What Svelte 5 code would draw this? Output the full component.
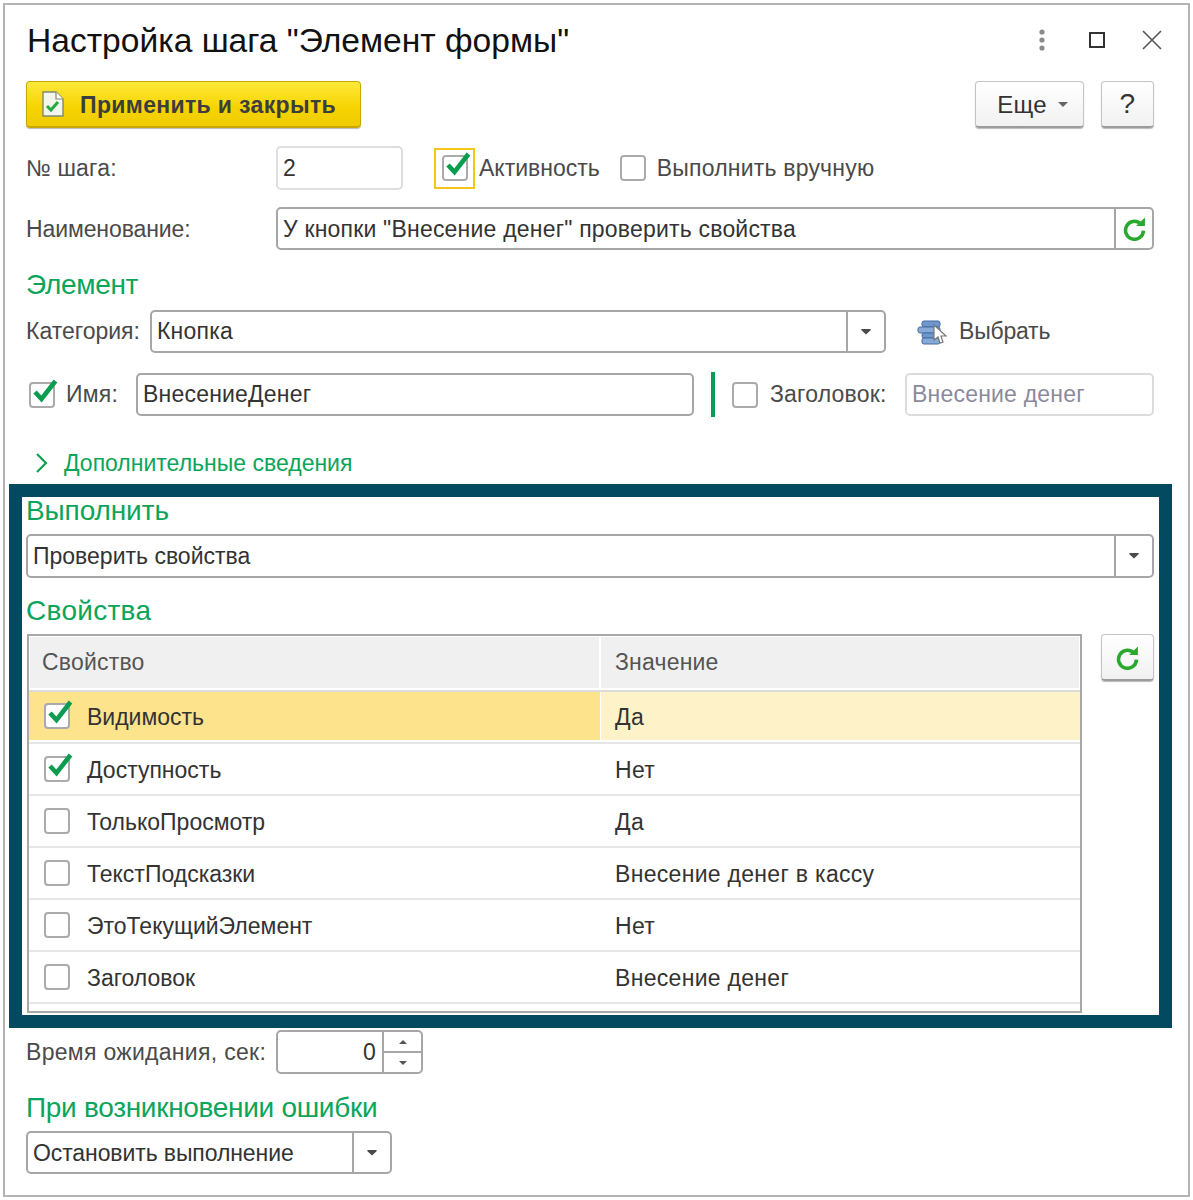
<script>
	const props = [
		{ name: 'Видимость', value: 'Да', on: true },
		{ name: 'Доступность', value: 'Нет', on: true },
		{ name: 'ТолькоПросмотр', value: 'Да', on: false },
		{ name: 'ТекстПодсказки', value: 'Внесение денег в кассу', on: false },
		{ name: 'ЭтоТекущийЭлемент', value: 'Нет', on: false },
		{ name: 'Заголовок', value: 'Внесение денег', on: false }
	];
</script>

{#snippet checkbox(on)}
	<span class="check">
		{#if on}
			<svg viewBox="0 0 28 28" width="28" height="28"><path d="M5 14l6.5 7L25.5 3" fill="none" stroke="#0a9d50" stroke-width="4.6" /></svg>
		{/if}
	</span>
{/snippet}

{#snippet refresh(size)}
	<svg viewBox="0 0 24 24" width={size} height={size}>
		<path d="M18.6 8.2A8.6 8.6 0 1 0 20.6 14" fill="none" stroke="#2aa92e" stroke-width="3.4" />
		<path d="M13.5 9.6H22V1.4z" fill="#2aa92e" />
	</svg>
{/snippet}

{#snippet arrow()}
	<svg class="arrow" viewBox="0 0 12 7" width="10" height="6"><path d="M0.5 0h11v1.5L6 6.5 0.5 1.5z" fill="#4a4a4a" /></svg>
{/snippet}

<div class="window">
	<header class="title-row">
		<h1>Настройка шага "Элемент формы"</h1>
		<div class="win-tools">
			<svg viewBox="0 0 8 24" width="8" height="24"><circle cx="4" cy="4" r="2.6" fill="#8a8a8a" /><circle cx="4" cy="12" r="2.6" fill="#8a8a8a" /><circle cx="4" cy="20" r="2.6" fill="#8a8a8a" /></svg>
			<svg class="max" viewBox="0 0 16 16" width="16" height="16"><rect x="1" y="1" width="14" height="14" fill="none" stroke="#333" stroke-width="2" /></svg>
			<svg class="close" viewBox="0 0 20 20" width="20" height="20"><path d="M1 1l18 18M19 1L1 19" stroke="#555" stroke-width="1.6" /></svg>
		</div>
	</header>

	<div class="row toolbar">
		<button class="btn primary">
			<svg viewBox="0 0 22 26" width="22" height="26">
				<path d="M1 1h13l7 7v17H1z" fill="#f4f6ee" stroke="#7d8a70" stroke-width="1.4" />
				<path d="M14 1v7h7" fill="#fff" stroke="#7d8a70" stroke-width="1.2" />
				<path d="M5 15l4 4 7-8" fill="none" stroke="#26a845" stroke-width="3" />
			</svg>
			<span class="btn-text">Применить и закрыть</span>
		</button>
		<span class="spacer"></span>
		<button class="btn more"><span class="btn-text">Еще</span> <svg viewBox="0 0 10 5" width="10" height="5"><path d="M0 0h10L5 5z" fill="#666" /></svg></button>
		<button class="btn help">?</button>
	</div>

	<div class="row step">
		<label class="label wide" for="step">№ шага:</label>
		<div class="input short" id="step">2</div>
		<span class="focus">{@render checkbox(true)}</span>
		<span class="label active">Активность</span>
		{@render checkbox(false)}
		<span class="label manual">Выполнить вручную</span>
	</div>

	<div class="row name">
		<span class="label wide tight">Наименование:</span>
		<div class="input grow">
			<span class="value">У кнопки "Внесение денег" проверить свойства</span>
			<span class="addon">{@render refresh(25)}</span>
		</div>
	</div>

	<h2 class="heading element">Элемент</h2>

	<div class="row category">
		<span class="label cat">Категория:</span>
		<div class="input cat-input">
			<span class="value">Кнопка</span>
			<span class="addon">{@render arrow()}</span>
		</div>
		<span class="pick">
			<svg viewBox="0 0 30 26" width="30" height="26">
				<rect x="5" y="2" width="18" height="6" rx="2" fill="#6f97cc" stroke="#456da5" />
				<rect x="1" y="8" width="22" height="6" rx="2" fill="#86a9d8" stroke="#456da5" />
				<rect x="5" y="14" width="18" height="5" rx="2" fill="#6f97cc" stroke="#456da5" />
				<rect x="5" y="19" width="18" height="6" rx="2" fill="#86a9d8" stroke="#456da5" />
				<path d="M17 6v15l4-3 2 6 3-1-2-6h5z" fill="#fff" stroke="#777" stroke-width="1.2" />
			</svg>
			<span class="label">Выбрать</span>
		</span>
	</div>

	<div class="row ident">
		<span class="ident-check">{@render checkbox(true)}</span>
		<span class="label ident-label">Имя:</span>
		<div class="input ident-input"><span class="value">ВнесениеДенег</span></div>
		<span class="divider"></span>
		{@render checkbox(false)}
		<span class="label caption">Заголовок:</span>
		<div class="input soft caption-input"><span class="value">Внесение денег</span></div>
	</div>

	<div class="row details">
		<svg viewBox="0 0 14 22" width="14" height="22"><path d="M2 2l9 9-9 9" fill="none" stroke="#10a050" stroke-width="2.2" /></svg>
		<span>Дополнительные сведения</span>
	</div>

	<section class="frame">
		<h2 class="heading run">Выполнить</h2>
		<div class="input select-run">
			<span class="value">Проверить свойства</span>
			<span class="addon">{@render arrow()}</span>
		</div>

		<h2 class="heading props">Свойства</h2>
		<div class="props-row">
			<div class="table">
				<div class="thead">
					<div class="th">Свойство</div>
					<div class="th">Значение</div>
				</div>
				{#each props as prop, i}
					<div class="tr" class:selected={i === 0}>
						<div class="td first">
							{@render checkbox(prop.on)}
							<span>{prop.name}</span>
						</div>
						<div class="td second">{prop.value}</div>
					</div>
				{/each}
			</div>
			<button class="btn reload">{@render refresh(25)}</button>
		</div>
	</section>

	<div class="row wait">
		<span class="label wide wider">Время ожидания, сек:</span>
		<div class="input spin">
			<span class="value num">0</span>
			<span class="spin-btns">
				<span><svg viewBox="0 0 8 4" width="8" height="4"><path d="M0 4h8L4 0z" fill="#555" /></svg></span>
				<span><svg viewBox="0 0 8 4" width="8" height="4"><path d="M0 0h8L4 4z" fill="#555" /></svg></span>
			</span>
		</div>
	</div>

	<h2 class="heading error">При возникновении ошибки</h2>
	<div class="input select-error">
		<span class="value">Остановить выполнение</span>
		<span class="addon">{@render arrow()}</span>
	</div>
</div>

<style>
	:global(body) {
		background: #fff;
	}

	.window {
		box-sizing: border-box;
		width: 1187px;
		height: 1194px;
		margin: 3px;
		padding: 0 34px 0 21px;
		border: 2px solid #b4b4b4;
		background: #fff;
		font-family: 'Liberation Sans', Arial, sans-serif;
		font-size: 23px;
		letter-spacing: 0.2px;
		color: #333;
	}

	.title-row {
		display: flex;
		align-items: center;
		height: 70px;
	}

	h1 {
		margin: 0 0 0 1px;
		flex: 1;
		padding-top: 2px;
		font-size: 33.6px;
		font-weight: 400;
		letter-spacing: 0;
		color: #111;
	}

	.win-tools {
		display: flex;
		align-items: center;
		margin-right: -8px;
	}

	.win-tools .max {
		margin-left: 43px;
	}

	.win-tools .close {
		margin-left: 37px;
	}

	.row {
		display: flex;
		align-items: center;
	}

	.spacer {
		flex: 1;
	}

	.btn {
		box-sizing: border-box;
		display: flex;
		align-items: center;
		justify-content: center;
		height: 47px;
		padding: 0;
		border: 1px solid #c4c4c4;
		border-bottom: 2px solid #9c9c9c;
		border-radius: 4px;
		background: linear-gradient(#fff, #f1f1f1);
		box-shadow: 0 1px 1px #bbb;
		font: inherit;
		letter-spacing: inherit;
		color: #333;
	}

	.btn-text {
		padding-top: 2px;
	}

	.toolbar {
		margin-top: 6px;
	}

	.primary {
		justify-content: flex-start;
		width: 335px;
		padding-left: 15px;
		gap: 16px;
		border-color: #c8a800;
		background: linear-gradient(#ffe93a, #f5d300 60%, #efcb00);
		font-weight: 700;
		letter-spacing: 0.35px;
		color: #3d3d3d;
	}

	.more {
		width: 109px;
		gap: 11px;
		padding-left: 6px;
		font-size: 24px;
	}

	.help {
		width: 53px;
		margin-left: 17px;
		font-size: 28px;
	}

	.label {
		white-space: nowrap;
		color: #4a4a4a;
	}

	.wide {
		width: 250px;
		flex: none;
	}

	.tight {
		letter-spacing: -0.1px;
	}

	.wider {
		letter-spacing: 0.3px;
	}

	.input {
		box-sizing: border-box;
		display: flex;
		align-items: center;
		height: 43px;
		border: 2px solid #a6a6a6;
		border-radius: 5px;
		background: #fff;
	}

	.value {
		flex: 1;
		padding-left: 5px;
		white-space: nowrap;
		color: #333;
	}

	.addon {
		box-sizing: border-box;
		display: flex;
		align-items: center;
		justify-content: center;
		flex: none;
		width: 38px;
		height: 100%;
		border-left: 2px solid #a6a6a6;
	}

	.grow {
		flex: 1;
	}

	.step {
		margin-top: 18px;
		height: 44px;
	}

	.short {
		box-sizing: border-box;
		width: 127px;
		height: 44px;
		padding-left: 5px;
		border-color: #dedede;
	}

	.focus {
		box-sizing: border-box;
		display: flex;
		align-items: center;
		justify-content: center;
		width: 41px;
		height: 41px;
		margin-left: 31px;
		border: 2px solid #f6c51b;
	}

	.active {
		margin: 0 20px 0 4px;
		letter-spacing: 0;
	}

	.manual {
		margin-left: 11px;
	}

	.check {
		box-sizing: border-box;
		position: relative;
		display: inline-block;
		flex: none;
		width: 26px;
		height: 26px;
		border: 2px solid #ababab;
		border-radius: 4px;
		background: #fff;
	}

	.check svg {
		position: absolute;
		left: -1px;
		top: -6px;
		overflow: visible;
	}

	.name {
		margin-top: 17px;
		height: 43px;
	}

	.name .label,
	.name .value,
	.select-error .value {
		padding-top: 2px;
	}

	.heading {
		margin: 0;
		font-size: 28px;
		font-weight: 400;
		letter-spacing: -0.3px;
		line-height: 30px;
		color: #0aa55a;
	}

	.element {
		margin-top: 20px;
	}

	.category {
		margin-top: 10px;
		height: 43px;
	}

	.cat {
		width: 124px;
		flex: none;
		letter-spacing: 0;
	}

	.cat-input {
		width: 736px;
	}

	.pick {
		display: flex;
		align-items: center;
		gap: 12px;
		margin-left: 31px;
		letter-spacing: -0.2px;
	}

	.ident {
		margin-top: 19px;
		height: 45px;
	}

	.ident-check {
		display: flex;
		margin-left: 3px;
	}

	.ident-label {
		margin-left: 11px;
		width: 70px;
	}

	.ident-input {
		width: 558px;
	}

	.divider {
		width: 4px;
		height: 45px;
		margin: 0 17px;
		background: #0a9d58;
	}

	.caption {
		width: 135px;
		margin-left: 12px;
		flex: none;
	}

	.soft {
		border-color: #dcdcdc;
	}

	.soft .value {
		color: #8a8a9c;
	}

	.caption-input {
		flex: 1;
	}

	.details {
		gap: 15px;
		height: 32px;
		margin-top: 30px;
		padding-left: 9px;
		letter-spacing: 0;
		color: #0aa55a;
	}

	.frame {
		box-sizing: border-box;
		width: 1163px;
		height: 544px;
		margin: 5px 0 0 -17px;
		padding: 0 5px 0 4px;
		border: 13px solid #034a60;
	}

	.run {
		line-height: 28px;
		letter-spacing: -0.1px;
	}

	.select-run {
		height: 44px;
		margin-top: 9px;
		letter-spacing: 0;
	}

	.props {
		margin-top: 18px;
		letter-spacing: 0.3px;
	}

	.props-row {
		display: flex;
		align-items: flex-start;
		margin-top: 8px;
		padding-left: 1px;
	}

	.table {
		box-sizing: border-box;
		width: 1055px;
		height: 379px;
		border: 2px solid #a8a8a8;
	}

	.thead,
	.tr {
		display: grid;
		grid-template-columns: 571px 1fr;
	}

	.thead {
		height: 56px;
		border-bottom: 2px solid #dcdcdc;
		box-sizing: border-box;
	}

	.th {
		display: flex;
		align-items: center;
		margin: 1px 1px 2px 1px;
		padding-left: 12px;
		background: #f0f0f0;
		color: #555;
	}

	.th + .th {
		margin-left: 1px;
		padding-left: 14px;
	}

	.tr {
		box-sizing: border-box;
		height: 52px;
		border-bottom: 2px solid #e6e6e6;
	}

	.td {
		display: flex;
		align-items: center;
		height: 50px;
		white-space: nowrap;
	}

	.first {
		gap: 17px;
		padding-left: 15px;
	}

	.first span:last-child {
		padding-top: 2px;
		letter-spacing: 0;
	}

	.second {
		box-sizing: border-box;
		padding: 2px 0 0 14px;
		border-left: 1px solid transparent;
		letter-spacing: 0.3px;
	}

	.selected .first {
		height: 48px;
		background: #fde38c;
	}

	.selected .second {
		height: 48px;
		border-left-color: #fff;
		background: #fef3c8;
	}

	.reload {
		width: 53px;
		margin-left: 19px;
	}

	.wait {
		margin-top: 2px;
		height: 44px;
	}

	.spin {
		width: 147px;
		height: 44px;
	}

	.num {
		padding: 0 6px 0 0;
		text-align: right;
	}

	.spin-btns {
		display: flex;
		flex-direction: column;
		flex: none;
		width: 37px;
		height: 100%;
		border-left: 2px solid #a6a6a6;
	}

	.spin-btns span {
		display: flex;
		align-items: center;
		justify-content: center;
		flex: 1;
	}

	.spin-btns span + span {
		border-top: 2px solid #a6a6a6;
	}

	.error {
		margin-top: 19px;
	}

	.select-error {
		width: 366px;
		margin-top: 8px;
		letter-spacing: -0.1px;
	}
</style>
